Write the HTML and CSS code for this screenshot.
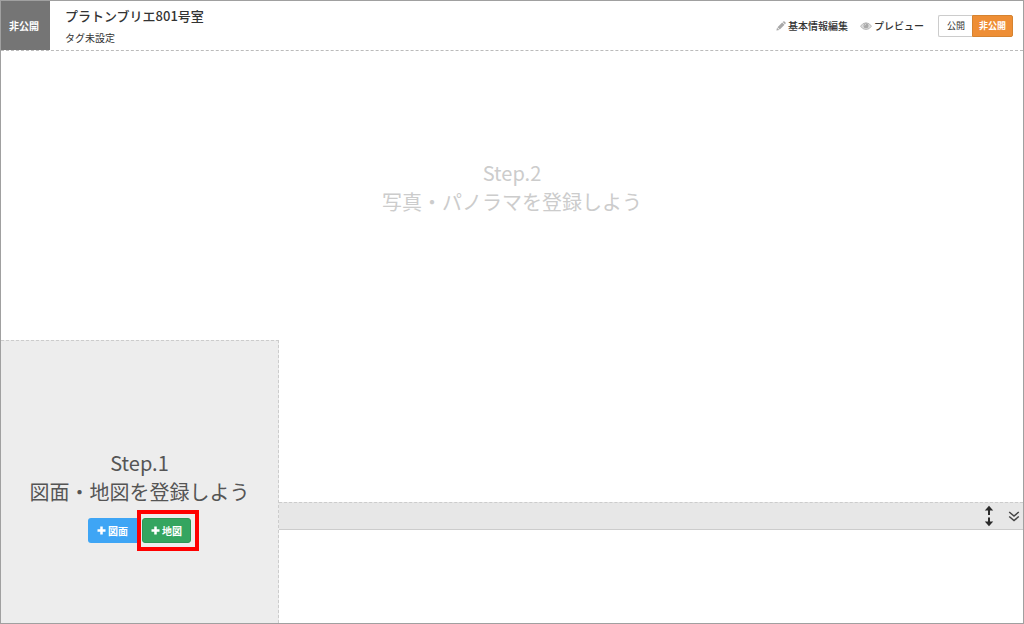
FILE: index.html
```html
<!DOCTYPE html>
<html lang="ja">
<head>
<meta charset="utf-8">
<meta name="viewport" content="width=device-width, initial-scale=1">
<title>プラトンブリエ801号室</title>
<link rel="stylesheet" href="styles.css">
</head>
<body>
<div class="app">
  <header class="header">
    <div class="status">非公開</div>
    <div class="heading">
      <h1 class="title">プラトンブリエ801号室</h1>
      <p class="tags">タグ未設定</p>
    </div>
    <nav class="actions">
      <a class="action" href="#edit"><svg class="icon" viewBox="0 0 10 10" aria-hidden="true"><path d="M.4 9.600 1 6.700 3.300 9zM1.500 6.200 6.200 1.500 8.500 3.800 3.800 8.500zM6.700 1 7.400.4Q8 0 8.500.5L9.500 1.500Q10 2.100 9.500 2.700L9 3.300z" fill="#a8a8a8"/></svg>基本情報編集</a>
      <a class="action" href="#preview"><svg class="icon icon-eye" viewBox="0 0 12 10" aria-hidden="true"><path d="M.5 5.200Q2.700 1.800 6 1.800T11.500 5.200Q9.300 8.500 6 8.500T.5 5.200z" fill="#ddd" stroke="#b5b5b5" stroke-width=".9"/><circle cx="6" cy="4.700" r="2.500" fill="#aaa"/><path d="M4.700 4.500Q4.800 3.400 6 3.300" fill="none" stroke="#eee" stroke-width=".6"/></svg>プレビュー</a>
    </nav>
    <div class="toggle">
      <button class="toggle-button" type="button">公開</button>
      <button class="toggle-button toggle-active" type="button" aria-pressed="true">非公開</button>
    </div>
  </header>
  <main class="workspace">
    <section class="stage">
      <h2 class="step">Step.2<br>写真・パノラマを登録しよう</h2>
    </section>
    <section class="plan">
      <h2 class="step">Step.1<br>図面・地図を登録しよう</h2>
      <div class="buttons">
        <button class="button button-plan" type="button"><svg class="plus" viewBox="0 0 9 9" aria-hidden="true"><path d="M4.500 .5V8.500M.5 4.500H8.500" stroke="#fff" stroke-width="2.500"/></svg>図面</button>
        <div class="highlight">
          <button class="button button-map" type="button"><svg class="plus" viewBox="0 0 9 9" aria-hidden="true"><path d="M4.500 .5V8.500M.5 4.500H8.500" stroke="#fff" stroke-width="2.500"/></svg>地図</button>
        </div>
      </div>
    </section>
    <div class="bar">
      <button class="tool" type="button" aria-label="高さを変更"><svg width="10" height="22" viewBox="0 0 10 22" aria-hidden="true"><path d="M5 3V10M5 12.500V19" stroke="#2b2b2b" stroke-width="2"/><path d="M.8 5.500 5 .8 9.200 5.500zM.8 16.500 5 21.200 9.200 16.500z" fill="#2b2b2b"/></svg></button>
      <button class="tool" type="button" aria-label="閉じる"><svg width="12" height="12" viewBox="0 0 12 12" aria-hidden="true"><path d="M1.200 2 6 6 10.800 2M1.200 6.500 6 10.500 10.800 6.500" fill="none" stroke="#444" stroke-width="1.500"/></svg></button>
    </div>
    <section class="photos" aria-label="写真一覧"></section>
  </main>
</div>
</body>
</html>
```
FILE: styles.css
```css
* {
  box-sizing: border-box;
}

body {
  margin: 0;
  background: #fff;
  color: #333;
  font-family: "Noto Sans CJK JP", sans-serif;
  font-size: 10px;
  line-height: 16px;
}

button {
  font: inherit;
  cursor: pointer;
}

h1, h2, p {
  margin: 0;
}

.app {
  display: flex;
  flex-direction: column;
  min-height: 100vh;
  border: 1px solid #a0a0a0;
}

.header {
  display: flex;
  align-items: center;
  height: 50px;
  padding-right: 10px;
  border-bottom: 1px dashed #bbb;
}

.status {
  display: flex;
  align-items: center;
  align-self: stretch;
  width: 49px;
  padding-left: 8px;
  background: #757575;
  color: #fff;
  font-weight: 700;
}

.heading {
  padding-top: 1px;
  margin-left: 15px;
}

.title {
  font-size: 13px;
  font-weight: 500;
  line-height: 24px;
}

.tags {
  line-height: 20px;
}

.actions {
  display: flex;
  gap: 12px;
  margin-left: auto;
  font-weight: 500;
}

.action {
  display: flex;
  align-items: center;
  gap: 2px;
  color: #333;
  text-decoration: none;
}

.icon {
  width: 10px;
  height: 10px;
}

.icon-eye {
  width: 12px;
}

.toggle {
  display: flex;
  margin-left: 14px;
}

.toggle-button {
  height: 22px;
  padding: 0 7px 0 8px;
  border: 1px solid #ccc;
  border-right: 0;
  border-radius: 2px 0 0 2px;
  background: #fff;
  color: #333;
  font-size: 9px;
}

.toggle-active {
  padding: 0 6px;
  border: 1px solid #d58330;
  border-radius: 0 2px 2px 0;
  background: #ee8e35;
  color: #fff;
  font-weight: 700;
}

.workspace {
  display: grid;
  flex: 1;
  grid-template-columns: 278px 1fr;
  grid-template-rows: 1fr 162px 28px 93px;
}

.stage {
  grid-area: 1 / 1 / 3 / 3;
  padding-top: 107px;
  color: #ccc;
}

.plan {
  grid-area: 2 / 1 / 5 / 2;
  padding-top: 107px;
  border-top: 1px dashed #ccc;
  border-right: 1px dashed #ccc;
  background: #ededed;
  color: #555;
}

.step {
  font-size: 20px;
  font-weight: 400;
  line-height: 29px;
  text-align: center;
}

.buttons {
  display: flex;
  align-items: center;
  justify-content: center;
  margin-top: 4px;
  margin-left: 8px;
}

.highlight {
  display: flex;
  padding: 4px 4px 4px 1px;
  border: 4px solid #f00;
}

.button {
  display: flex;
  align-items: center;
  justify-content: center;
  gap: 2px;
  width: 49px;
  height: 25px;
  padding: 0;
  border: 0;
  border-radius: 3px;
  color: #fff;
  font-weight: 700;
}

.button-plan {
  border-radius: 3px 0 0 3px;
  background: #3ea5f5;
}

.button-map {
  border: 1px solid #2c9656;
  background: #34a560;
}

.plus {
  width: 9px;
  height: 9px;
}

.bar {
  display: flex;
  grid-area: 3 / 2;
  align-items: center;
  justify-content: flex-end;
  gap: 14px;
  padding-right: 3px;
  border-top: 1px dashed #ccc;
  border-bottom: 1px solid #ccc;
  background: #e7e7e7;
}

.tool {
  display: flex;
  padding: 0;
  border: 0;
  background: none;
}

.photos {
  grid-area: 4 / 2;
}
```
